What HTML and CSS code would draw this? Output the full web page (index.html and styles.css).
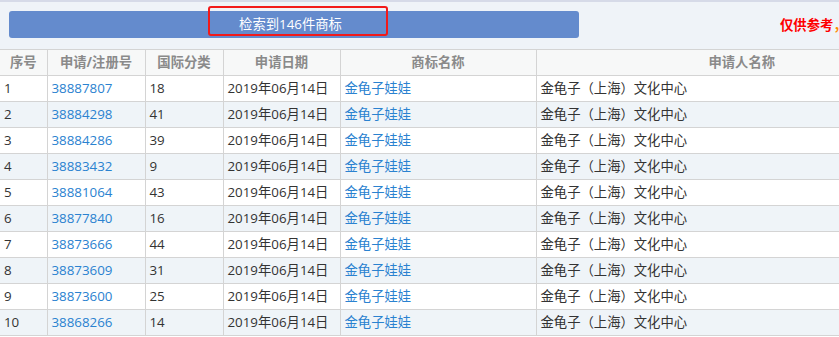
FILE: index.html
```html
<!DOCTYPE html>
<html lang="zh">
<head>
<meta charset="utf-8">
<title>检索结果</title>
<link rel="stylesheet" href="styles.css">
</head>
<body>
<div class="page">
  <div class="topline"></div>
  <div class="toolbar">
    <div class="result-bar">检索到146件商标</div>
    <div class="note"><span class="note-red">仅供参考</span><span class="note-orange">，以官方数据为准</span></div>
    <div class="highlight"></div>
  </div>
  <table class="grid">
    <colgroup>
      <col class="c-no"><col class="c-reg"><col class="c-cls"><col class="c-date"><col class="c-name"><col class="c-app">
    </colgroup>
    <thead>
      <tr><th>序号</th><th>申请/注册号</th><th>国际分类</th><th>申请日期</th><th>商标名称</th><th>申请人名称</th></tr>
    </thead>
    <tbody>
      <tr><td>1</td><td><a class="lnk">38887807</a></td><td>18</td><td>2019年06月14日</td><td><a class="lnk">金龟子娃娃</a></td><td>金龟子（上海）文化中心</td></tr>
      <tr><td>2</td><td><a class="lnk">38884298</a></td><td>41</td><td>2019年06月14日</td><td><a class="lnk">金龟子娃娃</a></td><td>金龟子（上海）文化中心</td></tr>
      <tr><td>3</td><td><a class="lnk">38884286</a></td><td>39</td><td>2019年06月14日</td><td><a class="lnk">金龟子娃娃</a></td><td>金龟子（上海）文化中心</td></tr>
      <tr><td>4</td><td><a class="lnk">38883432</a></td><td>9</td><td>2019年06月14日</td><td><a class="lnk">金龟子娃娃</a></td><td>金龟子（上海）文化中心</td></tr>
      <tr><td>5</td><td><a class="lnk">38881064</a></td><td>43</td><td>2019年06月14日</td><td><a class="lnk">金龟子娃娃</a></td><td>金龟子（上海）文化中心</td></tr>
      <tr><td>6</td><td><a class="lnk">38877840</a></td><td>16</td><td>2019年06月14日</td><td><a class="lnk">金龟子娃娃</a></td><td>金龟子（上海）文化中心</td></tr>
      <tr><td>7</td><td><a class="lnk">38873666</a></td><td>44</td><td>2019年06月14日</td><td><a class="lnk">金龟子娃娃</a></td><td>金龟子（上海）文化中心</td></tr>
      <tr><td>8</td><td><a class="lnk">38873609</a></td><td>31</td><td>2019年06月14日</td><td><a class="lnk">金龟子娃娃</a></td><td>金龟子（上海）文化中心</td></tr>
      <tr><td>9</td><td><a class="lnk">38873600</a></td><td>25</td><td>2019年06月14日</td><td><a class="lnk">金龟子娃娃</a></td><td>金龟子（上海）文化中心</td></tr>
      <tr><td>10</td><td><a class="lnk">38868266</a></td><td>14</td><td>2019年06月14日</td><td><a class="lnk">金龟子娃娃</a></td><td>金龟子（上海）文化中心</td></tr>
    </tbody>
  </table>
</div>
</body>
</html>
```
FILE: styles.css
```css
html, body {
  margin: 0;
  padding: 0;
  background: #ffffff;
  overflow: hidden;
}
.page {
  width: 948px;
  font-family: "Open Sans", "Noto Sans CJK SC", sans-serif;
  font-size: 13.33px;
  color: #333333;
}
.topline {
  height: 2px;
  background: #d6dae8;
}
.toolbar {
  position: relative;
  height: 47px;
  background: #eff3f8;
  display: flex;
  align-items: flex-start;
  white-space: nowrap;
}
.result-bar {
  margin: 9px 0 0 9px;
  width: 563px;
  padding-right: 7px;
  height: 27px;
  line-height: 27px;
  background: #648bcd;
  border-radius: 3px;
  color: #ffffff;
  text-align: center;
}
.note {
  margin: 13px 0 0 201px;
  line-height: 20px;
  font-weight: bold;
}
.note-red { color: #ff0000; }
.note-orange { color: #ff8a00; }
.highlight {
  position: absolute;
  left: 208px;
  top: 4px;
  width: 176px;
  height: 26px;
  border: 2px solid #f21a1a;
  border-radius: 3px;
}
.grid {
  width: 948px;
  border-collapse: collapse;
  table-layout: fixed;
}
.c-no { width: 47px; }
.c-reg { width: 98px; }
.c-cls { width: 78px; }
.c-date { width: 117px; }
.c-name { width: 196px; }
.grid th, .grid td {
  border: 1px solid #d4d4d4;
  height: 25px;
  padding: 0 4px;
  line-height: 25px;
  white-space: nowrap;
  overflow: hidden;
}
.grid th:first-child, .grid td:first-child { border-left: none; }
.grid th {
  background: #f7f8f8;
  color: #8a8a8a;
  font-weight: bold;
  text-align: center;
}
.grid td { text-align: left; }
.grid tbody tr:nth-child(even) td { background: #eff4f8; }
.lnk {
  color: #2a82d0;
  text-decoration: none;
}
```
